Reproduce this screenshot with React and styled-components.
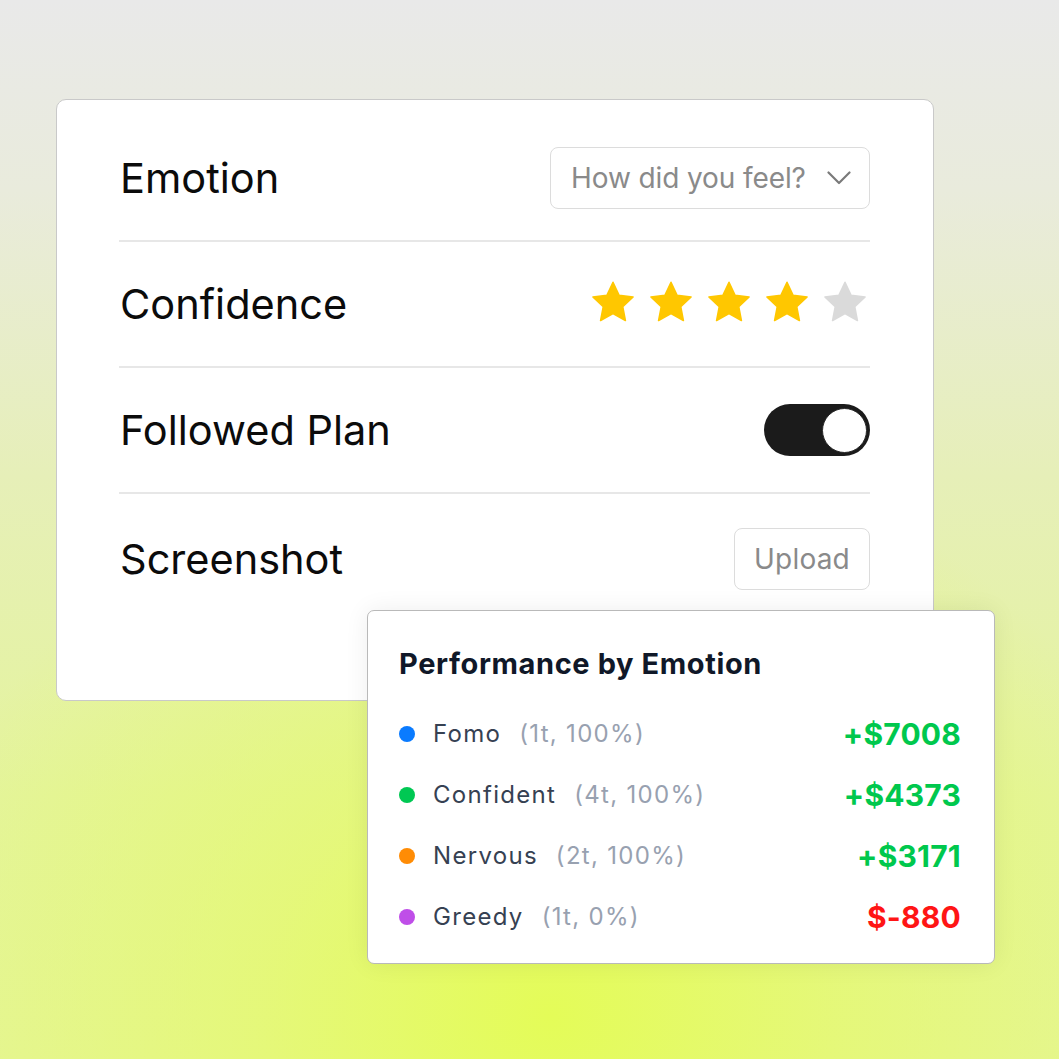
import React from 'react';
import styled, { createGlobalStyle } from 'styled-components';

const GlobalStyle = createGlobalStyle`
  html, body { margin: 0; padding: 0; }
  body {
    width: 1059px;
    height: 1059px;
    overflow: hidden;
    font-family: "Inter", "Liberation Sans", sans-serif;
    background:
      radial-gradient(ellipse 62% 55% at 52% 96%, #e4fc58 0%, rgba(229,249,110,0.7) 45%, rgba(229,245,140,0) 100%),
      linear-gradient(to bottom, #e9e9e9 0%, #e9ebdc 18%, #e6efb8 45%, #e4f49c 75%, #e5f596 100%);
  }
`;

const Stage = styled.div`
  position: relative;
  width: 1059px;
  height: 1059px;
  padding: 99px 0 0 56px;
  box-sizing: border-box;
`;

const FormCard = styled.div`
  width: 878px;
  height: 602px;
  box-sizing: border-box;
  background: #fff;
  border: 1px solid #c9c9c9;
  border-radius: 10px;
  padding: 16px 63px 0 62px;
  display: flex;
  flex-direction: column;
`;

const Row = styled.div`
  height: 126px;
  box-sizing: border-box;
  display: flex;
  align-items: center;
  justify-content: space-between;
  border-bottom: ${p => (p.$last ? 'none' : '2px solid #e7e7e7')};
  padding-top: ${p => (p.$last ? '4px' : '0')};
`;

const Label = styled.span`
  font-size: 41.5px;
  font-weight: 400;
  color: #0b0b0b;
  letter-spacing: 0;
  padding-left: 1px;
`;

const Select = styled.div`
  width: 320px;
  height: 62px;
  box-sizing: border-box;
  border: 1.5px solid #dcdcdc;
  border-radius: 8px;
  display: flex;
  align-items: center;
  justify-content: space-between;
  padding: 0 18px 0 20px;
  font-size: 28px;
  color: #8a8a8a;
  letter-spacing: -0.1px;
`;

const Stars = styled.div`
  display: flex;
  gap: 12px;
  margin-right: 2px;
  margin-top: -4px;
`;

const Toggle = styled.div`
  width: 106px;
  height: 52px;
  border-radius: 26px;
  background: #1b1b1b;
  display: flex;
  align-items: center;
  justify-content: flex-end;
  padding: 0 3px;
  box-sizing: border-box;
`;

const Knob = styled.div`
  width: 45px;
  height: 45px;
  border-radius: 50%;
  background: #fff;
  border: 1px solid #2a2a2a;
  box-sizing: border-box;
`;

const UploadButton = styled.div`
  width: 136px;
  height: 62px;
  box-sizing: border-box;
  border: 1.5px solid #dcdcdc;
  border-radius: 8px;
  display: flex;
  align-items: center;
  justify-content: center;
  font-size: 28px;
  color: #8a8a8a;
  letter-spacing: 0.2px;
`;

const PerfCard = styled.div`
  position: absolute;
  left: 367px;
  top: 610px;
  width: 628px;
  height: 354px;
  box-sizing: border-box;
  background: #fff;
  border: 1px solid #b9b9b9;
  border-radius: 7px;
  box-shadow: 0 0 24px rgba(0, 0, 0, 0.07);
  padding: 35px 33px 0 31px;
`;

const PerfTitle = styled.div`
  font-size: 29px;
  font-weight: 700;
  color: #101828;
  line-height: 36px;
  letter-spacing: 0.6px;
  margin-bottom: 21px;
`;

const PerfRow = styled.div`
  height: 61px;
  display: flex;
  align-items: center;
`;

const Dot = styled.span`
  width: 16px;
  height: 16px;
  border-radius: 50%;
  background: ${p => p.$color};
  margin-right: 18px;
  flex-shrink: 0;
`;

const Name = styled.span`
  font-size: 24px;
  color: #364152;
  letter-spacing: 1.3px;
  margin-right: 18px;
`;

const Count = styled.span`
  font-size: 24px;
  color: #98a1b0;
  letter-spacing: 1.3px;
`;

const Value = styled.span`
  margin-left: auto;
  font-size: 30px;
  font-weight: 700;
  color: ${p => (p.$neg ? '#ff1515' : '#00c84d')};
  letter-spacing: 0.2px;
`;

const Star = ({ filled }) => (
  <svg width="46" height="44" viewBox="0 0 24 23">
    <path
      d="M12 1.2l3.2 6.8 7.3.9-5.4 5 1.4 7.3L12 17.6l-6.5 3.6 1.4-7.3-5.4-5 7.3-.9z"
      fill={filled ? '#ffc700' : '#dadada'}
      stroke={filled ? '#ffc700' : '#dadada'}
      strokeWidth="0.8"
      strokeLinejoin="round"
    />
  </svg>
);

const Chevron = () => (
  <svg width="24" height="14" viewBox="0 0 24 14">
    <path d="M1.5 1.5L12 12 22.5 1.5" fill="none" stroke="#7a7a7a" strokeWidth="2.2" strokeLinecap="round" strokeLinejoin="round" />
  </svg>
);

const emotions = [
  { name: 'Fomo', count: '(1t, 100%)', value: '+$7008', color: '#0a7bff' },
  { name: 'Confident', count: '(4t, 100%)', value: '+$4373', color: '#00c853' },
  { name: 'Nervous', count: '(2t, 100%)', value: '+$3171', color: '#ff8c05' },
  { name: 'Greedy', count: '(1t, 0%)', value: '$-880', color: '#bf4ee8', neg: true },
];

export default function App() {
  return (
    <>
      <GlobalStyle />
      <Stage>
        <FormCard>
          <Row>
            <Label>Emotion</Label>
            <Select>
              <span>How did you feel?</span>
              <Chevron />
            </Select>
          </Row>
          <Row>
            <Label>Confidence</Label>
            <Stars>
              {[1, 2, 3, 4, 5].map(i => <Star key={i} filled={i <= 4} />)}
            </Stars>
          </Row>
          <Row>
            <Label>Followed Plan</Label>
            <Toggle><Knob /></Toggle>
          </Row>
          <Row $last>
            <Label>Screenshot</Label>
            <UploadButton>Upload</UploadButton>
          </Row>
        </FormCard>

        <PerfCard>
          <PerfTitle>Performance by Emotion</PerfTitle>
          {emotions.map(e => (
            <PerfRow key={e.name}>
              <Dot $color={e.color} />
              <Name>{e.name}</Name>
              <Count>{e.count}</Count>
              <Value $neg={e.neg}>{e.value}</Value>
            </PerfRow>
          ))}
        </PerfCard>
      </Stage>
    </>
  );
}
